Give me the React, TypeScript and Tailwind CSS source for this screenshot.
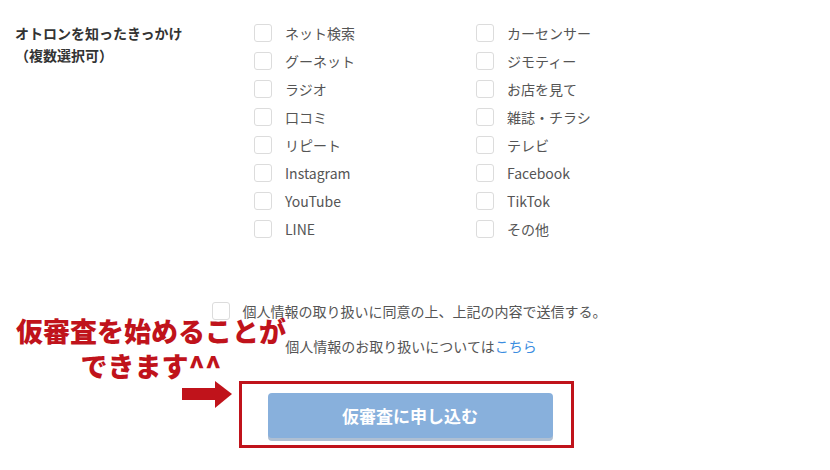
const leftItems = ['ネット検索', 'グーネット', 'ラジオ', '口コミ', 'リピート', 'Instagram', 'YouTube', 'LINE']
const rightItems = ['カーセンサー', 'ジモティー', 'お店を見て', '雑誌・チラシ', 'テレビ', 'Facebook', 'TikTok', 'その他']

function CheckRow({ label }: { label: string }) {
  return (
    <label className="flex h-[28px] items-center gap-[13px] text-[14px] text-[#555]">
      <span className="block h-[18px] w-[18px] rounded-[3px] border border-[#dcdcdc] bg-white" />
      <span>{label}</span>
    </label>
  )
}

export default function App() {
  return (
    <div
      className="relative h-[470px] w-[830px] overflow-hidden bg-white"
      style={{ fontFamily: '"Noto Sans CJK JP", "Noto Sans", sans-serif' }}
    >
      {/* Question block */}
      <div className="flex pt-[19px]">
        <div className="w-[254px] pl-[15px] pt-[3px] text-[14px] font-bold leading-[22px] text-[#333]">
          <div>オトロンを知ったきっかけ</div>
          <div>（複数選択可）</div>
        </div>
        <div className="flex">
          <div className="w-[222px]">
            {leftItems.map((l) => (
              <CheckRow key={l} label={l} />
            ))}
          </div>
          <div className="w-[222px]">
            {rightItems.map((l) => (
              <CheckRow key={l} label={l} />
            ))}
          </div>
        </div>
      </div>

      {/* Consent + submit */}
      <div className="mt-[54px] flex w-[818px] flex-col items-center">
        <label className="flex h-[28px] items-center gap-[13px] text-[14px] text-[#555]">
          <span className="block h-[18px] w-[18px] rounded-[3px] border border-[#dcdcdc] bg-white" />
          <span>個人情報の取り扱いに同意の上、上記の内容で送信する。</span>
        </label>
        <div className="mt-[10px] h-[22px] pl-[4px] text-[14px] leading-[22px] text-[#555]">
          個人情報のお取り扱いについては<span className="text-[#3b8de0]">こちら</span>
        </div>
        <div className="mt-[24px] -translate-x-[3px] border-[3px] border-[#c0131b] pb-[7px] pl-[26px] pr-[18px] pt-[9px]">
          <button className="h-[45px] w-[285px] rounded-[4px] bg-[#88b0dc] text-[17px] font-bold text-white shadow-[0_3px_0_#aebfd3]">
            仮審査に申し込む
          </button>
        </div>
      </div>

      {/* Annotation */}
      <div className="absolute left-[16px] top-[313px] w-[270px] text-center text-[27px] font-black leading-[35px] text-[#c0131b]">
        <div>仮審査を始めることが</div>
        <div>できます^^</div>
      </div>
      <svg className="absolute left-[182px] top-[381px]" width="51" height="28" viewBox="0 0 51 28">
        <rect x="0" y="7" width="34" height="12" fill="#c0131b" />
        <polygon points="33,0 50,13 33,27" fill="#c0131b" />
      </svg>
    </div>
  )
}
